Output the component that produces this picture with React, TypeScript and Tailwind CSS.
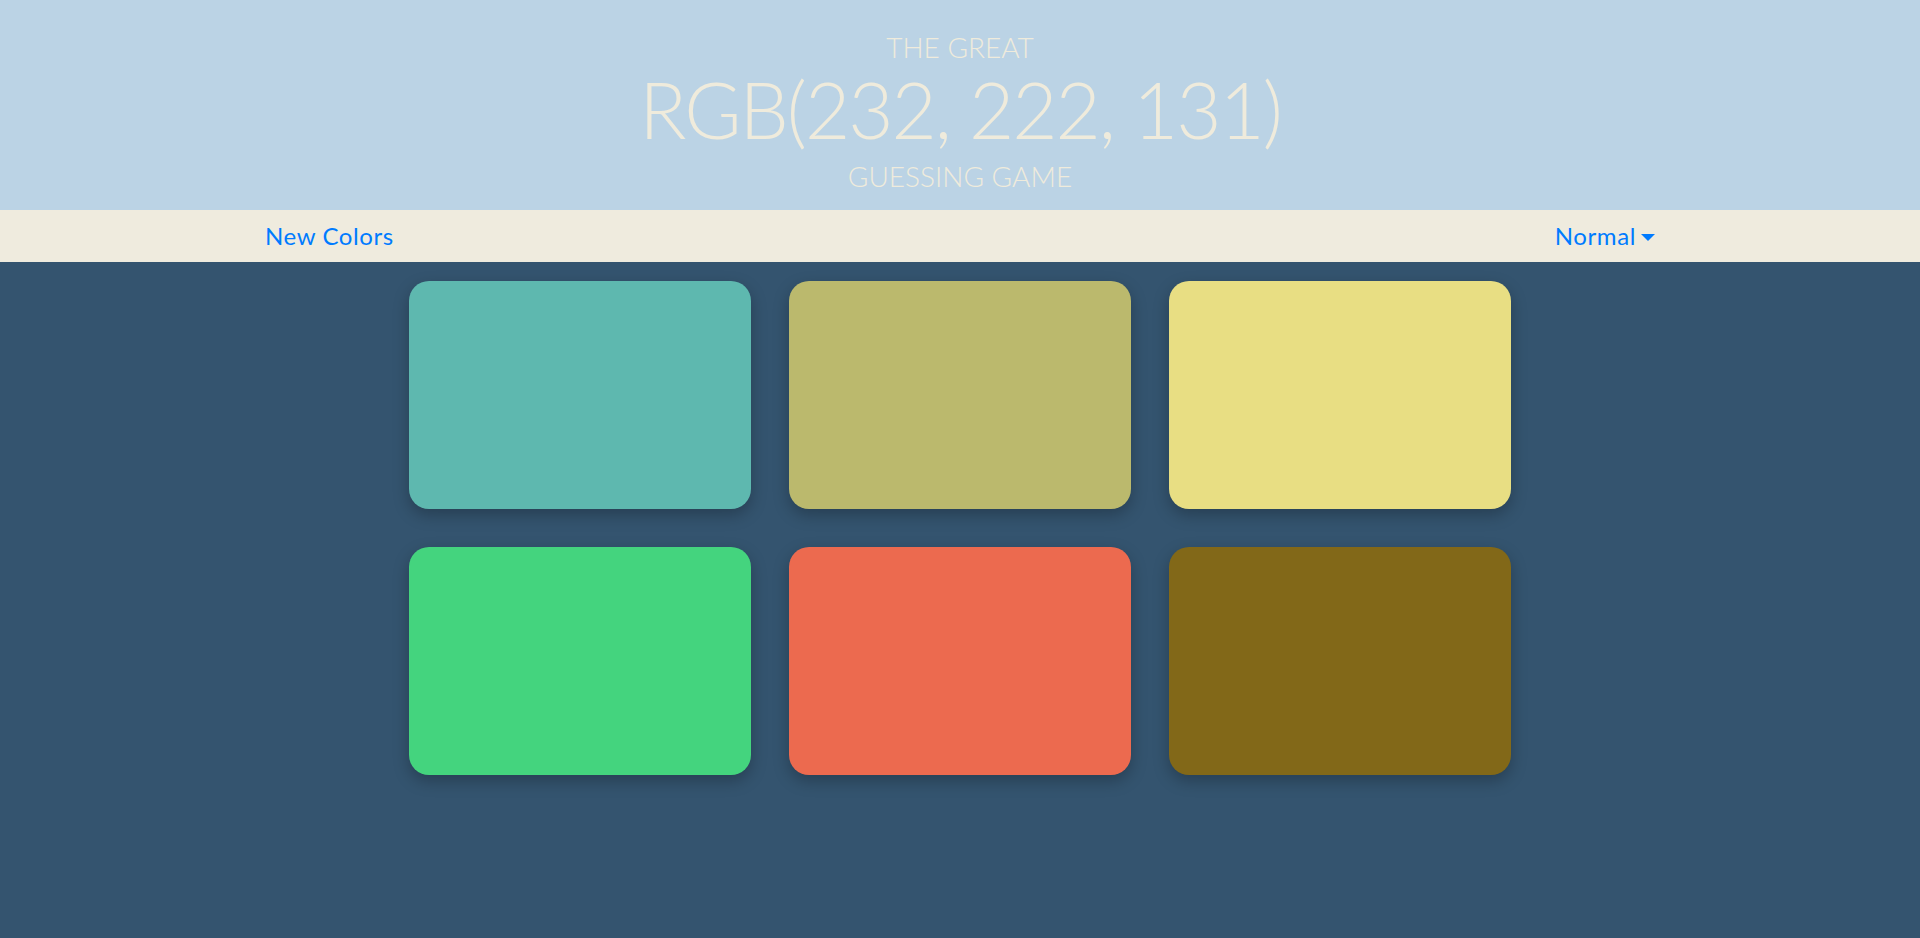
const squares = ["#5eb8af", "#bbb96d", "#e8de83", "#44d47e", "#ec6a4f", "#826818"];

export default function App() {
  return (
    <div className="min-h-screen bg-[#34546f] font-['Lato','Liberation_Sans',sans-serif]">
      <header className="flex h-[210px] flex-col items-center bg-[#bbd3e5] pt-[33px] font-light uppercase text-[#efebdc]">
        <h3 className="text-[28px] leading-none">The Great</h3>
        <h1 className="mt-[9px] text-[78px] leading-none tracking-[-2px]">RGB(232, 222, 131)</h1>
        <h3 className="mt-[14px] text-[28px] leading-none">Guessing Game</h3>
      </header>
      <nav className="flex h-[52px] items-center justify-between bg-[#efebde] px-[265px] text-[24px] tracking-[0.6px] text-[#007bff]">
        <a href="#">New Colors</a>
        <button className="flex items-center tracking-[0.6px]">
          Normal
          <span className="ml-[5px] mt-[2px] h-0 w-0 border-x-[7px] border-t-[7px] border-x-transparent border-t-[#007bff]" />
        </button>
      </nav>
      <main className="mx-auto grid w-[1102px] grid-cols-3 gap-[38px] pt-[19px]">
        {squares.map((c) => (
          <div
            key={c}
            className="h-[228px] rounded-[20px] shadow-[0_6px_16px_rgba(0,0,0,0.25)]"
            style={{ backgroundColor: c }}
          />
        ))}
      </main>
    </div>
  );
}
